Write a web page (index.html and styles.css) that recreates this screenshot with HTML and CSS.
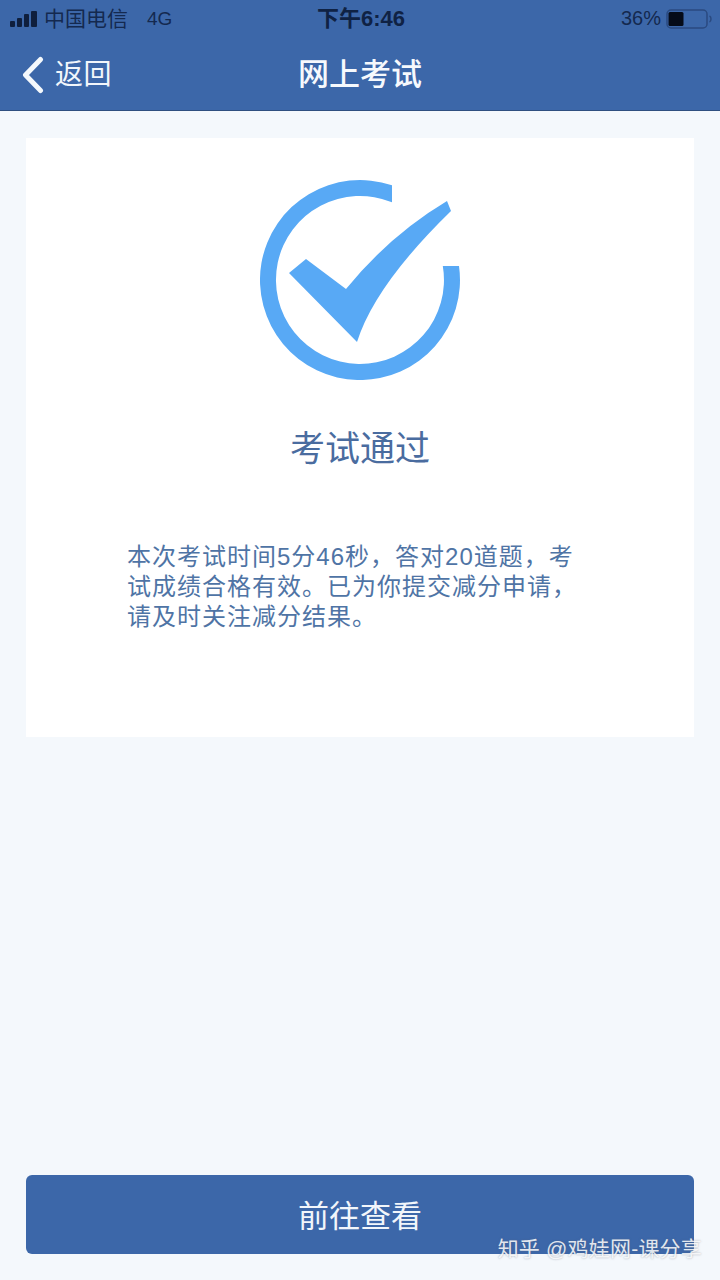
FILE: index.html
```html
<!DOCTYPE html>
<html lang="zh-CN">
<head>
<meta charset="utf-8">
<title>网上考试</title>
<link rel="stylesheet" href="styles.css">
</head>
<body>
<div class="page">
  <header class="header">
    <div class="status">
      <div class="status-left">
        <svg class="signal" viewBox="0 0 30 18" width="30" height="18" aria-hidden="true">
          <rect x="0" y="11" width="5" height="6" rx="1"/>
          <rect x="7" y="8" width="5" height="9" rx="1"/>
          <rect x="14" y="4" width="5" height="13" rx="1"/>
          <rect x="21" y="1" width="6" height="16" rx="1"/>
        </svg>
        <span class="carrier">中国电信</span>
        <span class="network">4G</span>
      </div>
      <div class="time">下午6:46</div>
      <div class="status-right">
        <span class="percent">36%</span>
        <svg class="battery" viewBox="0 0 46 20" width="46" height="20" aria-hidden="true">
          <rect x="1" y="1" width="40" height="18" rx="4" fill="none" stroke="#2a4a80" stroke-width="1.5"/>
          <rect x="2.500" y="3" width="15" height="14" rx="1.500" fill="#050b18"/>
          <path d="M43.500 7 C45.500 8 45.500 12 43.500 13" fill="none" stroke="#2a4a80" stroke-width="1.500"/>
        </svg>
      </div>
    </div>
    <nav class="nav">
      <div class="back">
        <svg class="chevron" viewBox="0 0 24 38" width="24" height="38" aria-hidden="true">
          <path d="M19.500 3.500 L4.500 19 L19.500 34.500" fill="none" stroke="#f4f8fc" stroke-width="5" stroke-linecap="round" stroke-linejoin="round"/>
        </svg>
        <span class="back-label">返回</span>
      </div>
      <div class="nav-title">网上考试</div>
    </nav>
  </header>

  <main class="main">
    <section class="card">
      <svg class="check" viewBox="260 180 200 200" width="200" height="200" aria-hidden="true">
        <path d="M392 185.300 A100 100 0 1 0 459 266 H442.800 A84 84 0 1 1 392 202.300 Z" fill="#58a9f5"/>
        <path d="M289 273 L306 259 L346 289 Q390 235 447 201 L451 211 Q375 285 357 342 Z" fill="#58a9f5"/>
      </svg>
      <h1 class="result">考试通过</h1>
      <p class="desc">本次考试时间5分46秒，答对20道题，考试成绩合格有效。已为你提交减分申请，请及时关注减分结果。</p>
    </section>
    <button class="action" type="button">前往查看</button>
  </main>
  <div class="watermark">知乎 @鸡娃网-课分享</div>
</div>
</body>
</html>
```

FILE: styles.css
```css
* {
  box-sizing: border-box;
}

html,
body {
  margin: 0;
  padding: 0;
}

body {
  font-family: "Liberation Sans", "Noto Sans CJK SC", sans-serif;
  background: #f4f8fc;
}

.page {
  position: relative;
  width: 720px;
  height: 1280px;
  display: flex;
  flex-direction: column;
  overflow: hidden;
  background: #f4f8fc;
}

.header {
  flex: none;
  height: 111px;
  background: #3c67a9;
  border-bottom: 1px solid #2f4f80;
}

.status {
  height: 37px;
  padding: 0 8px 0 10px;
  display: grid;
  grid-template-columns: 1fr auto 1fr;
  align-items: center;
  color: #14294f;
}

.status-left {
  display: flex;
  align-items: center;
}

.signal {
  fill: #0f1f3d;
  margin-right: 4px;
}

.carrier {
  font-size: 21px;
  line-height: 28px;
}

.network {
  margin-left: 19px;
  font-size: 19px;
}

.time {
  font-size: 22px;
  font-weight: 700;
  line-height: 28px;
  color: #0f2244;
}

.status-right {
  display: flex;
  align-items: center;
  justify-content: flex-end;
  gap: 5px;
}

.percent {
  font-size: 20px;
}

.nav {
  height: 73px;
  padding: 2px 21px 0;
  display: grid;
  grid-template-columns: 1fr auto 1fr;
  align-items: center;
}

.back {
  display: flex;
  align-items: center;
  gap: 10px;
  color: #f2f6fb;
}

.back-label {
  font-size: 28px;
  line-height: 38px;
  letter-spacing: 0.5px;
}

.nav-title {
  grid-column: 2;
  font-size: 31px;
  line-height: 40px;
  font-weight: 500;
  color: #f6f9fd;
}

.main {
  flex: 1;
  display: flex;
  flex-direction: column;
  padding: 27px 26px 26px;
}

.card {
  height: 599px;
  padding-top: 42px;
  background: #ffffff;
  display: flex;
  flex-direction: column;
  align-items: center;
}

.check {
  display: block;
  flex: none;
}

.result {
  margin: 46px 0 0;
  font-size: 35px;
  line-height: 46px;
  font-weight: 400;
  color: #4a6c9f;
}

.desc {
  width: 466px;
  margin: 70px 0 0;
  font-size: 24px;
  line-height: 30px;
  letter-spacing: 1px;
  color: #4f74a5;
}

.action {
  margin-top: auto;
  height: 79px;
  border: 0;
  border-radius: 6px;
  background: #3c67a9;
  color: #f2f6fb;
  font-family: inherit;
  font-size: 31px;
  padding: 0 0 3px;
}

.watermark {
  position: absolute;
  right: 18px;
  bottom: 16px;
  font-size: 21px;
  line-height: 30px;
  letter-spacing: 0.2px;
  color: rgba(255, 255, 255, 0.85);
  text-shadow: 0 0 2px rgba(90, 100, 120, 0.55);
  white-space: nowrap;
}
```
